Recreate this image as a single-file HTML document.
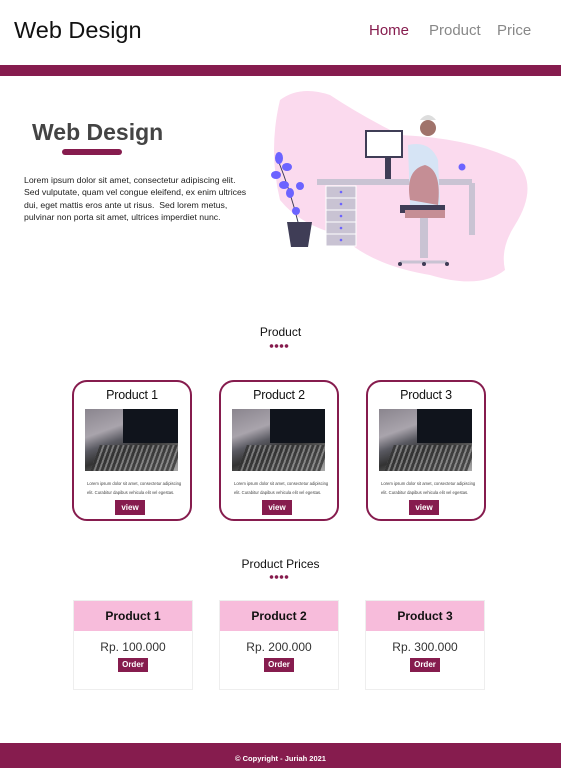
<!DOCTYPE html>
<html><head><meta charset="utf-8"><style>
*{margin:0;padding:0;box-sizing:border-box}
body{width:561px;height:768px;position:relative;overflow:hidden;background:#fff;font-family:"Liberation Sans",sans-serif}
.a{position:absolute}
.m{background:#861c4e}
.card{position:absolute;top:380px;width:120px;height:141px;border:2px solid #861c4e;border-radius:15px}
.card h3{position:absolute;top:6px;left:0;right:0;text-align:center;font-weight:normal;font-size:12.5px;color:#111;letter-spacing:-0.2px}
.img{position:absolute;left:11px;top:27px;width:93px;height:62px;background:linear-gradient(160deg,#8a858e 0%,#a9a4ac 30%,#5a5a62 45%,#333 60%,#777 80%,#aaa 100%);overflow:hidden}
.img:before{content:"";position:absolute;left:38px;top:0;width:55px;height:34px;background:#10141c}
.img:after{content:"";position:absolute;left:10px;top:36px;width:83px;height:26px;background:repeating-linear-gradient(90deg,#333 0 3px,#888 3px 5px);transform:skewX(-20deg);opacity:.8}
.txt{position:absolute;left:13px;top:98px;width:95px;font-size:4.2px;line-height:8.5px;color:#444}
.btn{position:absolute;color:#fff;font-weight:bold;font-size:8px;text-align:center}
.pc{position:absolute;top:600px;width:120px;height:90px;border:1px solid #eee}
.pc .h{height:30px;background:#f7bcdb;text-align:center;font-weight:bold;font-size:12px;line-height:31px;color:#111}
.pc .p{text-align:center;font-size:12px;margin-top:9px;color:#333}
.pc .o{display:block;margin:4px auto 0;width:30px;height:14px;background:#861c4e;color:#fff;font-size:8px;font-weight:bold;text-align:center;line-height:14px}
.dots{position:absolute;left:269px;width:20px;height:4px;background:radial-gradient(circle,#861c4e 1.6px,transparent 2px) 0 0/5px 4px}
</style></head><body>
<div class="a" style="left:14px;top:17px;font-size:23.5px;color:#111">Web Design</div>
<div class="a" style="left:369px;top:22px;font-size:15px;color:#861c4e">Home</div>
<div class="a" style="left:429px;top:22px;font-size:15px;color:#888">Product</div>
<div class="a" style="left:497px;top:22px;font-size:15px;color:#888">Price</div>
<div class="a m" style="left:0;top:65px;width:561px;height:11px"></div>

<div class="a" style="left:32px;top:119px;font-size:23px;font-weight:bold;color:#444">Web Design</div>
<div class="a m" style="left:62px;top:149px;width:60px;height:6px;border-radius:3px"></div>
<div class="a" style="left:24px;top:174px;width:226px;font-size:8.7px;line-height:12.3px;color:#222">Lorem ipsum dolor sit amet, consectetur adipiscing elit. Sed vulputate, quam vel congue eleifend, ex enim ultrices dui, eget mattis eros ante ut risus.&nbsp; Sed lorem metus, pulvinar non porta sit amet, ultrices imperdiet nunc.</div>

<svg class="a" style="left:260px;top:88px" width="280" height="195" viewBox="260 88 280 195">
<path d="M280 100 Q300 85 330 95 Q360 115 400 135 Q470 138 515 160 Q540 185 515 225 Q500 248 505 270 Q480 290 430 275 Q370 265 340 235 Q300 225 280 200 Q268 150 280 100Z" fill="#fbdaee"/>
<rect x="317" y="179" width="155" height="6" fill="#c9c3d3"/>
<rect x="469" y="183" width="6" height="52" fill="#c9c3d3"/>
<g fill="#c9c3d3" stroke="#fff" stroke-width="1"><rect x="326" y="186" width="30" height="12"/><rect x="326" y="198" width="30" height="12"/><rect x="326" y="210" width="30" height="12"/><rect x="326" y="222" width="30" height="12"/><rect x="326" y="234" width="30" height="12"/></g>
<g fill="#6c63ff"><circle cx="341" cy="192" r="1.3"/><circle cx="341" cy="204" r="1.3"/><circle cx="341" cy="216" r="1.3"/><circle cx="341" cy="228" r="1.3"/><circle cx="341" cy="240" r="1.3"/></g>
<rect x="366" y="131" width="36" height="26" fill="#fff" stroke="#3f3d56" stroke-width="2"/>
<rect x="385" y="157" width="6" height="22" fill="#3f3d56"/>
<path d="M408 145 Q430 140 438 160 L440 205 L410 205 Z" fill="#d6e4f5"/>
<circle cx="428" cy="128" r="8" fill="#a0736b"/>
<path d="M420 120 Q428 110 436 120" fill="#ddd"/>
<path d="M410 200 Q405 170 425 165 Q442 170 438 205 Z" fill="#c58e95"/>
<rect x="400" y="205" width="45" height="8" fill="#3f3d56"/>
<rect x="405" y="210" width="40" height="8" fill="#c58e95"/>
<rect x="420" y="218" width="8" height="40" fill="#c9c3d3"/>
<path d="M400 262 L447 262" stroke="#c9c3d3" stroke-width="3"/>
<circle cx="400" cy="264" r="2" fill="#3f3d56"/><circle cx="424" cy="264" r="2" fill="#3f3d56"/><circle cx="447" cy="264" r="2" fill="#3f3d56"/>
<circle cx="462" cy="167" r="3.5" fill="#6c63ff"/>
<path d="M287 222 L312 222 L308 247 L291 247Z" fill="#3f3d56"/>
<path d="M298 222 Q290 190 278 160" stroke="#3f3d56" fill="none"/>
<g fill="#6c63ff"><ellipse cx="279" cy="158" rx="4" ry="6"/><ellipse cx="276" cy="175" rx="5" ry="4"/><ellipse cx="284" cy="185" rx="5" ry="4"/><ellipse cx="290" cy="193" rx="4" ry="5"/><ellipse cx="300" cy="186" rx="4" ry="4"/><ellipse cx="296" cy="211" rx="4" ry="4"/><ellipse cx="287" cy="167" rx="5" ry="4"/></g>
</svg>

<div class="a" style="left:0;width:561px;top:325px;text-align:center;font-size:12px;color:#111">Product</div>
<div class="dots" style="top:344px"></div>

<div class="card" style="left:72px"><h3>Product 1</h3><div class="img"></div><div class="txt">Lorem ipsum dolor sit amet, consectetur adipiscing elit. Curabitur dapibus vehicula elit vel egestas.</div><div class="btn m" style="left:41px;top:118px;width:30px;height:15px;line-height:15px">view</div></div>
<div class="card" style="left:219px"><h3>Product 2</h3><div class="img"></div><div class="txt">Lorem ipsum dolor sit amet, consectetur adipiscing elit. Curabitur dapibus vehicula elit vel egestas.</div><div class="btn m" style="left:41px;top:118px;width:30px;height:15px;line-height:15px">view</div></div>
<div class="card" style="left:366px"><h3>Product 3</h3><div class="img"></div><div class="txt">Lorem ipsum dolor sit amet, consectetur adipiscing elit. Curabitur dapibus vehicula elit vel egestas.</div><div class="btn m" style="left:41px;top:118px;width:30px;height:15px;line-height:15px">view</div></div>

<div class="a" style="left:0;width:561px;top:557px;text-align:center;font-size:12px;color:#111">Product Prices</div>
<div class="dots" style="top:575px"></div>

<div class="pc" style="left:73px"><div class="h">Product 1</div><div class="p">Rp. 100.000</div><span class="o">Order</span></div>
<div class="pc" style="left:219px"><div class="h">Product 2</div><div class="p">Rp. 200.000</div><span class="o">Order</span></div>
<div class="pc" style="left:365px"><div class="h">Product 3</div><div class="p">Rp. 300.000</div><span class="o">Order</span></div>

<div class="a m" style="left:0;top:743px;width:561px;height:25px;color:#fff;font-size:7.5px;font-weight:bold;text-align:center;line-height:31px">© Copyright - Juriah 2021</div>
</body></html>
